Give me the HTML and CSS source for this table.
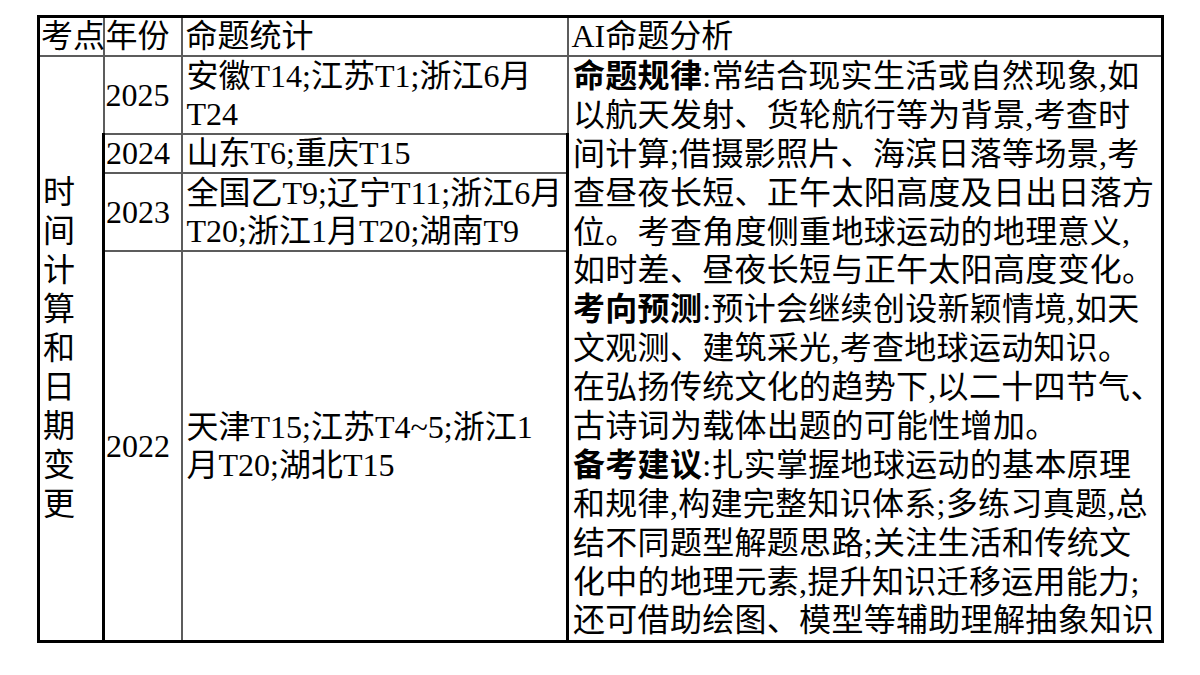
FILE: index.html
```html
<!DOCTYPE html>
<html lang="zh-CN">
<head>
<meta charset="utf-8">
<title>时间计算和日期变更</title>
<link rel="stylesheet" href="styles.css">
</head>
<body>
<table class="tbl">
  <colgroup>
    <col class="c1"><col class="c2"><col class="c3"><col class="c4">
  </colgroup>
  <thead>
    <tr class="hdr">
      <th class="th-tight">考点</th>
      <th class="th-tight">年份</th>
      <th>命题统计</th>
      <th>AI命题分析</th>
    </tr>
  </thead>
  <tbody>
    <tr class="r2">
      <td rowspan="4" class="topic"><span class="vert">时间计算和日期变更</span></td>
      <td class="year">2025</td>
      <td class="stat">安徽T14;江苏T1;浙江6月<br>T24</td>
      <td rowspan="4" class="ana">
        <div class="line"><b>命题规律</b>:常结合现实生活或自然现象,如</div>
        <div class="line">以航天发射、货轮航行等为背景,考查时</div>
        <div class="line">间计算;借摄影照片、海滨日落等场景,考</div>
        <div class="line">查昼夜长短、正午太阳高度及日出日落方</div>
        <div class="line">位。考查角度侧重地球运动的地理意义,</div>
        <div class="line">如时差、昼夜长短与正午太阳高度变化。</div>
        <div class="line"><b>考向预测</b>:预计会继续创设新颖情境,如天</div>
        <div class="line">文观测、建筑采光,考查地球运动知识。</div>
        <div class="line">在弘扬传统文化的趋势下,以二十四节气、</div>
        <div class="line">古诗词为载体出题的可能性增加。</div>
        <div class="line"><b>备考建议</b>:扎实掌握地球运动的基本原理</div>
        <div class="line">和规律,构建完整知识体系;多练习真题,总</div>
        <div class="line">结不同题型解题思路;关注生活和传统文</div>
        <div class="line">化中的地理元素,提升知识迁移运用能力;</div>
        <div class="line">还可借助绘图、模型等辅助理解抽象知识</div>
      </td>
    </tr>
    <tr class="r1">
      <td class="year">2024</td>
      <td class="stat">山东T6;重庆T15</td>
    </tr>
    <tr class="r2b">
      <td class="year">2023</td>
      <td class="stat">全国乙T9;辽宁T11;浙江6月<br>T20;浙江1月T20;湖南T9</td>
    </tr>
    <tr class="rlast">
      <td class="year">2022</td>
      <td class="stat">天津T15;江苏T4~5;浙江1<br>月T20;湖北T15</td>
    </tr>
  </tbody>
</table>
</body>
</html>
```
FILE: styles.css
```css
html, body {
  margin: 0;
  padding: 0;
  background: #ffffff;
}
body {
  padding: 15px 0 0 37px;
  font-family: "Liberation Serif", "Noto Sans CJK SC", serif;
  font-size: 32px;
  color: #000;
}
.tbl {
  border-collapse: collapse;
  table-layout: fixed;
  width: 1124px;
  border: 3px solid #000;
}
.c1 { width: 65px; }
.c2 { width: 78px; }
.c3 { width: 386px; }
.c4 { width: 595px; }
th, td {
  border: 2px solid #5c5c5c;
  padding: 0 3px;
  line-height: 38px;
  text-align: left;
  vertical-align: middle;
  font-weight: normal;
  white-space: nowrap;
}
.tbl thead th { border-top: 3px solid #000; }
.tbl tr > :first-child { border-left: 3px solid #000; }
.tbl tr > :last-child, .ana { border-right: 3px solid #000; }
.rlast td, .topic, .ana { border-bottom: 3px solid #000; }
.th-tight { padding: 0 0 0 1px; }
.hdr th { line-height: 37px; }
.r1 td { line-height: 37px; }
.r2 .year, .r2 .stat { height: 76px; }
.r1 .year, .r1 .stat { height: 37px; }
.r2b .year, .r2b .stat { height: 75px; }
.topic { vertical-align: middle; }
.vert {
  display: block;
  width: 1em;
  white-space: normal;
  word-break: break-all;
  line-height: 39px;
}
.year { padding-left: 1px; }
.stat { padding-left: 4px; }
.ana {
  vertical-align: top;
  padding: 0 2px 0 4px;
  letter-spacing: 0.3px;
}
.line { height: 38.9px; line-height: 38.9px; }
.ana b { font-weight: bold; }
```
